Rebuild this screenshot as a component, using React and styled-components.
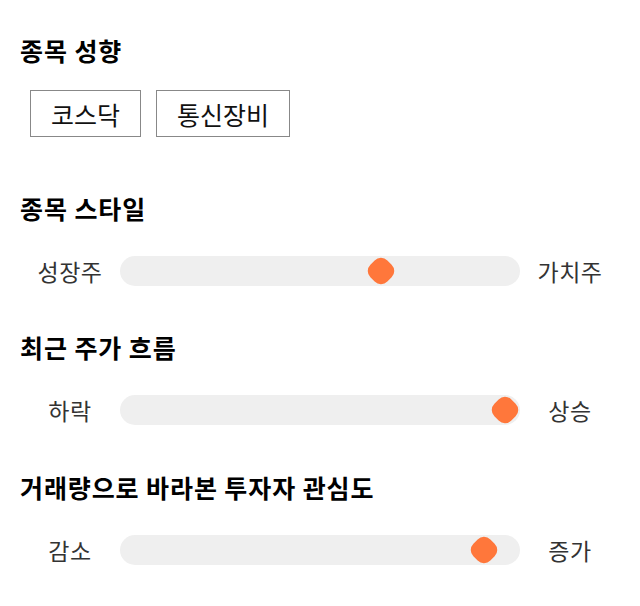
import React from 'react';
import styled, { createGlobalStyle } from 'styled-components';

const GlobalStyle = createGlobalStyle`
  body {
    margin: 0;
    background: #fff;
    font-family: "Noto Sans CJK KR", "Noto Sans", sans-serif;
  }
`;

const Page = styled.div`
  width: 600px;
  padding: 35px 20px 0;
`;

const Section = styled.section`
  margin-bottom: ${({ gap }) => gap}px;
`;

const Heading = styled.h2`
  margin: 0;
  font-size: 25px;
  line-height: 30px;
  font-weight: 700;
  color: #000;
  letter-spacing: 0.9px;
`;

const TagList = styled.div`
  display: flex;
  gap: 15px;
  margin: 25px 0 0 10px;
`;

const Tag = styled.div`
  border: 1px solid #888;
  height: 45px;
  padding: 0 20px;
  display: flex;
  align-items: center;
  font-size: 25px;
  color: #111;
`;

const Row = styled.div`
  display: grid;
  grid-template-columns: 100px 1fr 100px;
  align-items: center;
  margin-top: 33px;
`;

const Label = styled.span`
  text-align: center;
  font-size: 23px;
  line-height: 30px;
  color: #333;
  letter-spacing: 0.5px;
`;

const Track = styled.div`
  position: relative;
  height: 30px;
  border-radius: 15px;
  background: #efefef;
`;

const Thumb = styled.div`
  position: absolute;
  top: 50%;
  width: 24px;
  height: 24px;
  margin: -12px 0 0 -12px;
  background: #ff773b;
  border-radius: 9px;
  transform: rotate(45deg);
`;

const sliders = [
  { title: '종목 스타일', left: '성장주', right: '가치주', value: 0.653, gap: 46 },
  { title: '최근 주가 흐름', left: '하락', right: '상승', value: 0.962, gap: 47 },
  { title: '거래량으로 바라본 투자자 관심도', left: '감소', right: '증가', value: 0.91, gap: 0 },
];

export default function App() {
  return (
    <Page>
      <GlobalStyle />
      <Section gap={56}>
        <Heading>종목 성향</Heading>
        <TagList>
          <Tag>코스닥</Tag>
          <Tag>통신장비</Tag>
        </TagList>
      </Section>
      {sliders.map((s) => (
        <Section key={s.title} gap={s.gap}>
          <Heading>{s.title}</Heading>
          <Row>
            <Label>{s.left}</Label>
            <Track>
              <Thumb style={{ left: `${s.value * 100}%` }} />
            </Track>
            <Label>{s.right}</Label>
          </Row>
        </Section>
      ))}
    </Page>
  );
}
